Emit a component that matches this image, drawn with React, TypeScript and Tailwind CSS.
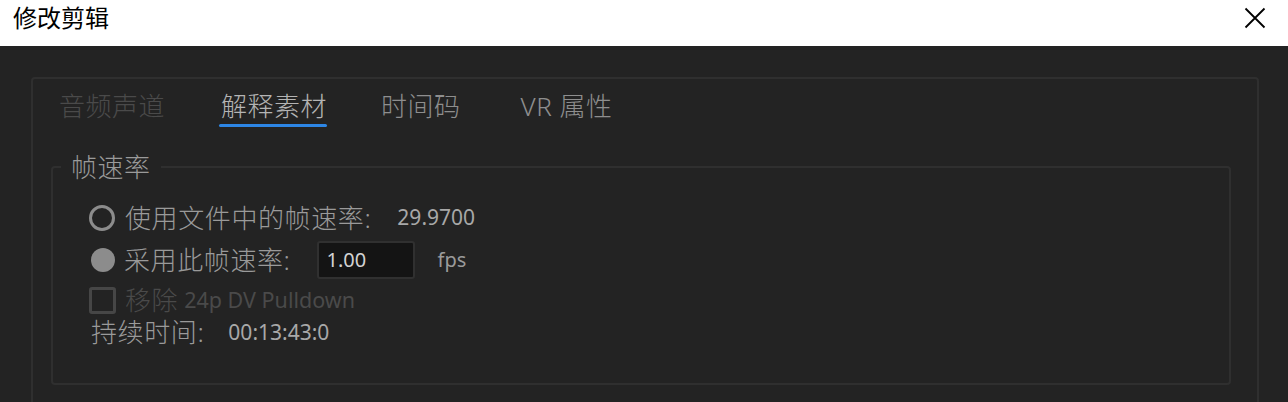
import { useState } from "react";

const tabs = [
  { label: "音频声道", state: "disabled" },
  { label: "解释素材", state: "active" },
  { label: "时间码", state: "idle" },
  { label: "VR 属性", state: "idle" },
];

const tabGap = ["", "ml-[56px]", "ml-[54px]", "ml-[60px]"];

function CloseIcon() {
  return (
    <svg width="22" height="22" viewBox="0 0 22 22" className="text-black">
      <path d="M1.5 1.5 L20.5 20.5 M20.5 1.5 L1.5 20.5" stroke="currentColor" strokeWidth="1.8" />
    </svg>
  );
}

export default function App() {
  const [rate] = useState("1.00");

  return (
    <div
      className="h-[402px] w-full overflow-hidden bg-[#232323]"
      style={{ fontFamily: '"Noto Sans", "Noto Sans CJK SC", sans-serif' }}
    >
      {/* title bar */}
      <div className="flex h-[46px] items-start justify-between bg-white pl-[13px] pr-[22px]">
        <div className="flex h-[35px] items-center text-[24px] text-black">修改剪辑</div>
        <div className="flex h-[35px] items-center">
          <CloseIcon />
        </div>
      </div>

      {/* body */}
      <div className="pl-[31px] pr-[29px] pt-[31px]">
        <div className="h-[400px] rounded-t-[4px] border-2 border-[#2f2f2f]">
          {/* tabs */}
          <div className="flex pl-[26px] pt-[10px]">
            {tabs.map((t, i) => (
              <div key={t.label} className={`flex flex-col ${tabGap[i]}`}>
                <span
                  className={`text-[26px] font-light leading-[34px] tracking-[0.5px] ${
                    t.state === "disabled"
                      ? "text-[#4a4a4a]"
                      : t.state === "active"
                      ? "text-[#b4b4b4]"
                      : "text-[#8e8e8e]"
                  }`}
                >
                  {t.label}
                </span>
                <div
                  className={`-ml-[2px] mt-[1px] h-[3px] rounded-full ${
                    t.state === "active" ? "bg-[#2d86e5]" : "bg-transparent"
                  }`}
                />
              </div>
            ))}
          </div>

          {/* frame rate group */}
          <fieldset className="ml-[18px] mr-[26px] mt-[25px] rounded-[4px] border-2 border-[#2f2f2f] pb-[36px]">
            <legend className="ml-[8px] px-[10px] text-[26px] font-light leading-[30px] tracking-[0.5px] text-[#9a9a9a]">
              帧速率
            </legend>

            <div className="pl-[36px] pt-[16px] font-light">
              <div className="flex h-[40px] items-center">
                <span className="h-[26px] w-[26px] rounded-full border-[3px] border-[#8c8c8c]" />
                <span className="ml-[10px] text-[26px] leading-[34px] tracking-[0.6px] text-[#9a9a9a]">
                  使用文件中的帧速率:
                </span>
                <span className="ml-[26px] text-[21px] font-normal text-[#a8a8a8]">29.9700</span>
              </div>

              <div className="mt-[2px] flex h-[40px] items-center">
                <span className="ml-[2px] h-[24px] w-[24px] rounded-full bg-[#8c8c8c]" />
                <span className="ml-[9px] text-[26px] leading-[34px] tracking-[0.6px] text-[#9a9a9a]">
                  采用此帧速率:
                </span>
                <div className="ml-[26px] flex h-[38px] w-[98px] items-center rounded-[3px] border-2 border-[#303030] bg-[#141414] pl-[8px] text-[20px] font-normal text-[#d2d2d2]">
                  {rate}
                </div>
                <span className="ml-[23px] text-[20px] font-normal text-[#9a9a9a]">fps</span>
              </div>

              <div className="mt-[5px] flex h-[30px] items-center">
                <span className="h-[27px] w-[27px] rounded-[3px] border-[3px] border-[#464646]" />
                <span className="ml-[9px] text-[26px] leading-[26px] tracking-[0.6px] text-[#4a4a4a]">移除</span>
                <span className="ml-[6px] text-[21.5px] font-normal leading-[26px] text-[#4a4a4a]">
                  24p DV Pulldown
                </span>
              </div>

              <div className="mt-[2px] flex h-[30px] items-center">
                <span className="ml-[2px] text-[26px] leading-[26px] tracking-[0.6px] text-[#9a9a9a]">持续时间:</span>
                <span className="ml-[24px] text-[21px] font-normal leading-[26px] text-[#a8a8a8]">00:13:43:0</span>
              </div>
            </div>
          </fieldset>
        </div>
      </div>
    </div>
  );
}
